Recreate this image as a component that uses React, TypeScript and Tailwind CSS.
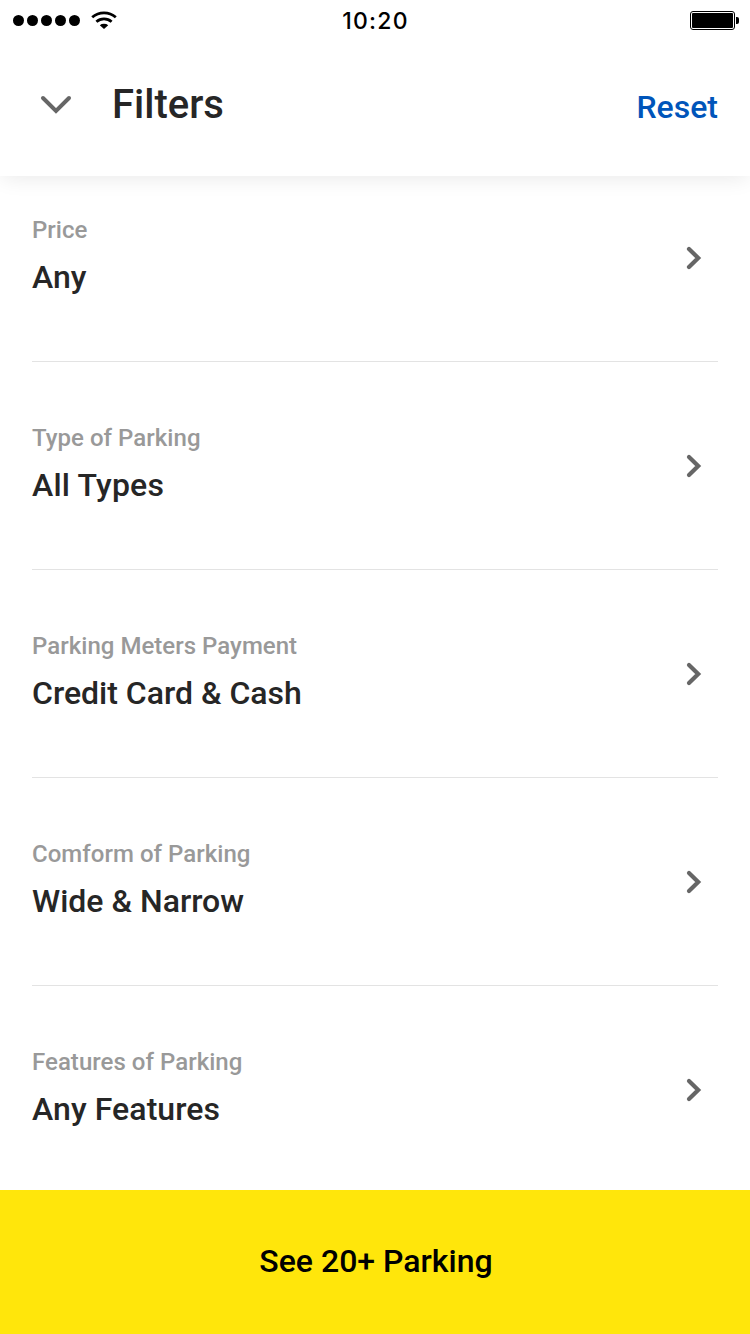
const rows = [
  ["Price", "Any", ""],
  ["Type of Parking", "All Types", "tracking-[0.2px]"],
  ["Parking Meters Payment", "Credit Card & Cash", ""],
  ["Comform of Parking", "Wide & Narrow", ""],
  ["Features of Parking", "Any Features", "tracking-[0.08px]"],
];

function StatusBar() {
  return (
    <div className="grid h-10 grid-cols-3 items-start">
      <div className="flex items-center pt-2.5 pl-[13px]">
        <svg width="106" height="20" viewBox="0 0 106 20" fill="#000">
          {[5.5, 19.5, 33.5, 47.5, 61.5].map((x) => (
            <circle key={x} cx={x} cy="10.5" r="5.5" />
          ))}
          <path d="M91 19l-4.200-3.800a5.800 4.800 0 0 1 8.400 0z" />
          <g fill="none" stroke="#000" strokeWidth="2.800">
            <path d="M83.400 11.800a11.400 11.400 0 0 1 15.200 0" />
            <path d="M79.200 7.300a18 18 0 0 1 23.600 0" />
          </g>
        </svg>
      </div>
      <div className="pt-px pl-px text-center font-['Inter',sans-serif] text-[23px] leading-10 font-medium tracking-[1.200px] text-black">10:20</div>
      <div className="flex justify-end pt-2.5 pr-[11px]">
        <svg width="49" height="20" viewBox="0 0 49 20">
          <rect x="0.500" y="1.500" width="44" height="18" rx="2.500" fill="none" stroke="#000" />
          <rect x="2" y="3" width="41" height="15" rx="1" />
          <path d="M46 7h1q2 0 2 2v3q0 2-2 2h-1z" />
        </svg>
      </div>
    </div>
  );
}

export default function App() {
  return (
    <div className="flex h-[1334px] w-[750px] flex-col overflow-hidden bg-white font-['Roboto',sans-serif] font-medium text-[#262626] antialiased">
      <header className="relative h-[176px] shrink-0 bg-white shadow-[0_4px_20px_-2px_rgba(0,0,0,0.09)]">
        <StatusBar />
        <div className="flex h-[130px] items-center px-8">
          <svg width="48" height="48" viewBox="0 0 48 48" fill="none" stroke="#666" strokeWidth="4">
            <path d="M11 17l13 13 13-13" strokeLinecap="round" />
          </svg>
          <h1 className="ml-8 flex-1 text-[40px] leading-[48px] font-medium">Filters</h1>
          <button className="pt-1 text-[32px] leading-10 font-medium text-[#0055ba]">Reset</button>
        </div>
      </header>
      <main className="flex-1 overflow-hidden px-8">
        {rows.map(([label, value, spacing]) => (
          <section key={label} className="flex h-[208px] justify-between border-b border-[#e3e3e3] pt-[60px] first:h-[186px] first:pt-[38px]">
            <div>
              <p className="text-[24px] leading-8 tracking-[0.03px] text-[#999]">{label}</p>
              <p className={`mt-2 text-[32px] leading-[46px] ${spacing}`}>{value}</p>
            </div>
            <svg className="mt-7 mr-2" width="32" height="32" viewBox="0 0 32 32" fill="none" stroke="#666" strokeWidth="4.200" strokeLinecap="round">
              <path d="M11 7l9.200 9-9.200 9" />
            </svg>
          </section>
        ))}
      </main>
      <button className="h-36 shrink-0 bg-[#ffe60b] pb-0.5 pl-0.5 text-[32px] font-medium text-black">See 20+ Parking</button>
    </div>
  );
}
